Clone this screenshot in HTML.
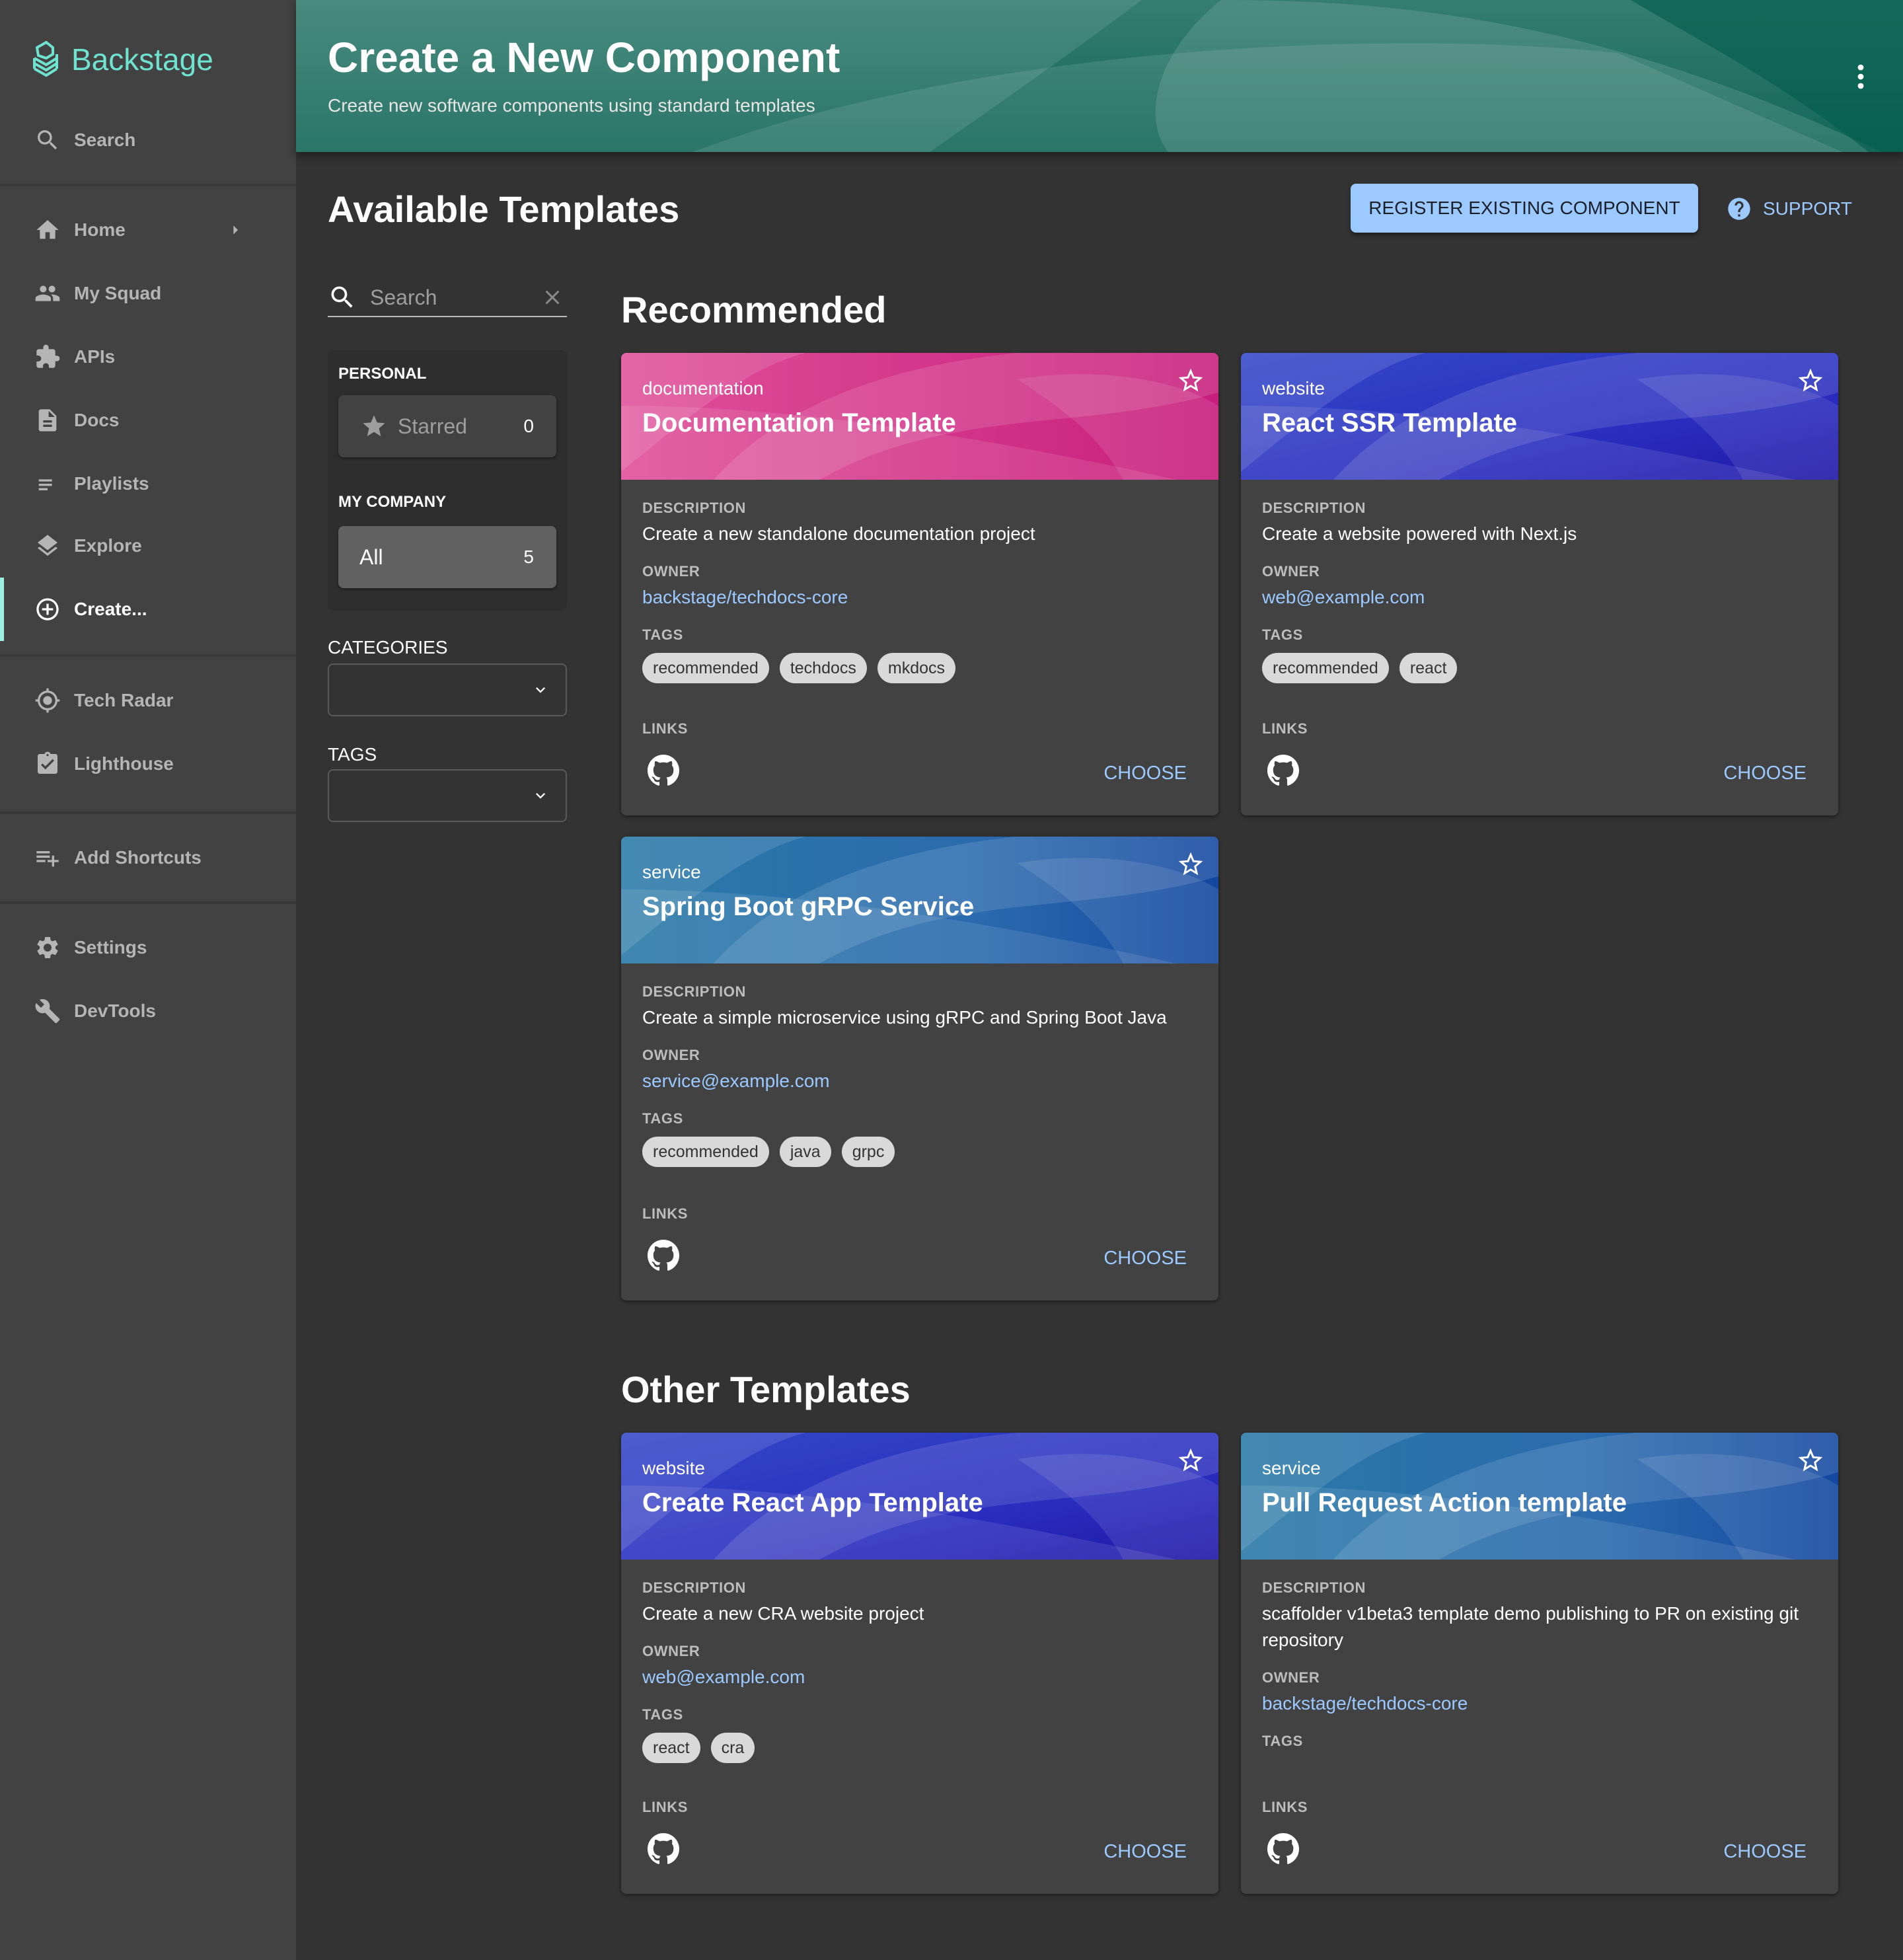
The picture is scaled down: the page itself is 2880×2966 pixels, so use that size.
<!DOCTYPE html>
<html><head><meta charset="utf-8">
<style>
*{box-sizing:border-box;margin:0;padding:0}
html,body{width:2880px;height:2966px;overflow:hidden;background:#333}
#root{zoom:2;width:1440px;height:1483px;position:relative;font-family:"Liberation Sans",Arial,sans-serif;color:#fff;background:#333}
.side{position:absolute;left:0;top:0;width:224px;height:1483px;background:#424242}
.logo{position:absolute;left:23px;top:30px;display:flex;align-items:center;color:#6fe3cf;font-size:23px}
.logo svg{margin-right:7px}
.si{position:absolute;left:0;width:224px;height:48px;display:flex;align-items:center;font-size:14px;font-weight:bold;color:#b5b5b5}
.si svg{position:absolute;left:26px;width:20px;height:20px;fill:#b5b5b5}
.si span{position:absolute;left:56px}
.div{position:absolute;left:0;width:224px;height:2px;background:#383838}
.hdr{position:absolute;left:224px;top:0;width:1216px;height:115px;background:#005b4b;overflow:hidden;box-shadow:0 3px 6px rgba(0,0,0,.4)}
.hdr h1{position:absolute;left:24px;top:25px;font-size:32px;font-weight:bold}
.hdr p{position:absolute;left:24px;top:72px;font-size:14px;color:#e6e6e6}
.h2{position:absolute;font-size:28px;font-weight:bold}
.btn{position:absolute;left:1022px;top:139px;width:263px;height:37px;background:#9cc9ff;border-radius:4px;color:#1a1f2a;font-size:14px;display:flex;align-items:center;justify-content:center;box-shadow:0 2px 3px rgba(0,0,0,.4)}
.sup{position:absolute;left:1306px;top:148px;color:#9cc9ff;font-size:14px;display:flex;align-items:center}
.srch{position:absolute;left:248px;top:210px;width:181px;height:30px;border-bottom:1px solid #bbb}
.fbox{position:absolute;left:248px;top:265px;width:181px;height:197px;background:#2e2e2e;border-radius:4px}
.lbl{position:absolute;font-size:12px;font-weight:bold}
.pill{position:absolute;left:8px;width:165px;height:47px;border-radius:4px;display:flex;align-items:center;font-size:16px;box-shadow:0 1px 2px rgba(0,0,0,.4)}
.sel{position:absolute;left:248px;width:181px;height:40px;border:1px solid #5a5a5a;border-radius:4px}
.sel svg{position:absolute;right:12px;top:12px}
.card{position:absolute;width:452px;background:#424242;border-radius:4px;overflow:hidden;box-shadow:0 1px 3px rgba(0,0,0,.5);display:flex;flex-direction:column}
.ch{position:relative;height:96px;flex:none;overflow:hidden}
.ch svg.bg{position:absolute;left:0;top:0}
.ch .t{position:absolute;left:16px;top:19px;font-size:14px}
.ch .n{position:absolute;left:16px;top:42px;font-size:20px;font-weight:bold}
.ch .st{position:absolute;right:10px;top:10px}
.cb{padding:15px 16px 0 16px;flex:1;display:flex;flex-direction:column}
.k{font-size:11px;font-weight:bold;color:#bdbdbd;letter-spacing:.3px;margin-bottom:3px}
.v{font-size:14px;line-height:20px;margin-bottom:12px}
.a{color:#9cc9ff}
.tags{display:flex;gap:8px;margin-top:4px;height:23px}
.tag{background:#d9d9d9;color:#333;font-size:12.5px;height:23px;border-radius:12px;padding:0 8px;display:flex;align-items:center}
.links{margin-top:auto;position:relative;height:72px;flex:none}
.links .k{position:absolute;top:0;left:0}
.links .gh{position:absolute;left:4px;top:26px}
.links .cz{position:absolute;right:8px;top:32px;color:#9cc9ff;font-size:14.5px}
</style></head><body><div id="root">

<div class="side">
  <div class="logo"><svg width="24" height="30" viewBox="0 0 24 30" fill="none" stroke="#6fe3cf" stroke-width="2"><path d="M5 6 L12 2 L17 6 L17 11 L12 14 L6 12Z"/><path d="M3 14 L12 19 L20 14"/><path d="M3 18 L12 23 L20 18"/><path d="M3 22 L12 27 L20 22"/><path d="M3 14 L3 22 M20 11 L20 22"/></svg>Backstage</div>
  <div class="si" style="top:82px"><svg viewBox="0 0 24 24"><path d="M15.5 14h-.79l-.28-.27A6.47 6.47 0 0 0 16 9.5 6.5 6.5 0 1 0 9.5 16c1.61 0 3.09-.59 4.23-1.57l.27.28v.79l5 4.99L20.49 19l-4.99-5zm-6 0C7.01 14 5 11.990 5 9.5S7.01 5 9.5 5 14 7.01 14 9.5 11.99 14 9.5 14z"/></svg><span>Search</span></div>
  <div class="div" style="top:139px"></div>
  <div class="si" style="top:150px"><svg viewBox="0 0 24 24"><path d="M10 20v-6h4v6h5v-8h3L12 3 2 12h3v8z"/></svg><span>Home</span><svg viewBox="0 0 24 24" style="left:170px;width:16px;height:16px"><path d="M10 17l5-5-5-5z"/></svg></div>
  <div class="si" style="top:198px"><svg viewBox="0 0 24 24"><path d="M16 11c1.66 0 2.99-1.34 2.99-3S17.66 5 16 5c-1.66 0-3 1.34-3 3s1.34 3 3 3zm-8 0c1.66 0 2.99-1.34 2.99-3S9.66 5 8 5C6.34 5 5 6.34 5 8s1.34 3 3 3zm0 2c-2.33 0-7 1.17-7 3.5V19h14v-2.5c0-2.33-4.67-3.5-7-3.5zm8 0c-.29 0-.62.02-.97.05 1.16.84 1.970 1.97 1.97 3.45V19h6v-2.5c0-2.33-4.67-3.5-7-3.5z"/></svg><span>My Squad</span></div>
  <div class="si" style="top:246px"><svg viewBox="0 0 24 24"><path d="M20.5 11H19V7c0-1.1-.9-2-2-2h-4V3.5a2.5 2.5 0 0 0-5 0V5H4c-1.1 0-2 .9-2 2v3.8h1.5c1.49 0 2.7 1.21 2.7 2.7s-1.21 2.7-2.7 2.7H2V20c0 1.1.9 2 2 2h3.8v-1.5c0-1.49 1.21-2.7 2.7-2.7 1.49 0 2.7 1.21 2.7 2.7V22H17c1.1 0 2-.9 2-2v-4h1.5a2.5 2.5 0 0 0 0-5z"/></svg><span>APIs</span></div>
  <div class="si" style="top:294px"><svg viewBox="0 0 24 24"><path d="M14 2H6c-1.1 0-2 .9-2 2v16c0 1.1.89 2 1.99 2H18c1.1 0 2-.9 2-2V8l-6-6zm2 16H8v-2h8v2zm0-4H8v-2h8v2zm-3-5V3.5L18.5 9H13z"/></svg><span>Docs</span></div>
  <div class="si" style="top:342px"><svg viewBox="0 0 24 24"><path d="M4 8h12v2H4zm0 4h12v2H4zm0 4h8v2H4z"/></svg><span>Playlists</span></div>
  <div class="si" style="top:389px"><svg viewBox="0 0 24 24"><path d="M11.99 18.54l-7.37-5.73L3 14.07l9 7 9-7-1.63-1.27-7.38 5.74zM12 16l7.36-5.73L21 9l-9-7-9 7 1.63 1.27L12 16z"/></svg><span>Explore</span></div>
  <div class="si" style="top:437px;color:#fff"><div style="position:absolute;left:0;top:0;width:3px;height:48px;background:#9bf0e1"></div><svg viewBox="0 0 24 24" style="fill:#fff"><path d="M13 7h-2v4H7v2h4v4h2v-4h4v-2h-4V7zm-1-5C6.48 2 2 6.48 2 12s4.48 10 10 10 10-4.48 10-10S17.52 2 12 2zm0 18c-4.41 0-8-3.59-8-8s3.59-8 8-8 8 3.59 8 8-3.59 8-8 8z"/></svg><span>Create...</span></div>
  <div class="div" style="top:495px"></div>
  <div class="si" style="top:506px"><svg viewBox="0 0 24 24"><path d="M12 8c-2.21 0-4 1.79-4 4s1.79 4 4 4 4-1.79 4-4-1.79-4-4-4zm8.94 3A8.99 8.99 0 0 0 13 3.06V1h-2v2.06A8.99 8.99 0 0 0 3.06 11H1v2h2.06A8.99 8.99 0 0 0 11 20.94V23h2v-2.06A8.99 8.99 0 0 0 20.94 13H23v-2h-2.06zM12 19c-3.87 0-7-3.13-7-7s3.13-7 7-7 7 3.13 7 7-3.13 7-7 7z"/></svg><span>Tech Radar</span></div>
  <div class="si" style="top:554px"><svg viewBox="0 0 24 24"><path d="M19 3h-4.18C14.4 1.84 13.3 1 12 1c-1.3 0-2.4.84-2.82 2H5c-1.1 0-2 .9-2 2v14c0 1.1.9 2 2 2h14c1.1 0 2-.9 2-2V5c0-1.1-.9-2-2-2zm-7 0c.55 0 1 .45 1 1s-.45 1-1 1-1-.45-1-1 .45-1 1-1zm-2 14l-4-4 1.41-1.41L10 14.17l6.59-6.59L18 9l-8 8z"/></svg><span>Lighthouse</span></div>
  <div class="div" style="top:614px"></div>
  <div class="si" style="top:625px"><svg viewBox="0 0 24 24"><path d="M14 10H2v2h12v-2zm0-4H2v2h12V6zm4 8v-4h-2v4h-4v2h4v4h2v-4h4v-2h-4zM2 16h8v-2H2v2z"/></svg><span>Add Shortcuts</span></div>
  <div class="div" style="top:682px"></div>
  <div class="si" style="top:693px"><svg viewBox="0 0 24 24"><path d="M19.14 12.94c.04-.3.06-.61.06-.94 0-.32-.02-.64-.07-.94l2.030-1.58a.49.49 0 0 0 .12-.61l-1.92-3.32a.49.49 0 0 0-.59-.22l-2.39.96c-.5-.38-1.03-.7-1.62-.94l-.36-2.54a.48.48 0 0 0-.48-.41h-3.84c-.24 0-.43.17-.47.41l-.36 2.54c-.59.24-1.13.57-1.62.94l-2.39-.96a.48.48 0 0 0-.59.22L2.74 8.87c-.12.21-.08.47.12.61l2.03 1.58c-.05.3-.09.63-.09.94s.02.64.07.94l-2.03 1.58a.49.49 0 0 0-.12.61l1.92 3.32c.12.22.37.29.59.22l2.39-.96c.5.38 1.03.7 1.62.94l.36 2.54c.05.24.24.41.48.41h3.84c.24 0 .44-.17.47-.41l.36-2.54c.59-.24 1.13-.56 1.62-.94l2.39.96c.22.08.47 0 .59-.22l1.92-3.32c.12-.22.07-.47-.12-.61l-2.01-1.58zM12 15.6c-1.98 0-3.6-1.62-3.6-3.6s1.62-3.6 3.6-3.6 3.6 1.62 3.6 3.6-1.62 3.6-3.6 3.6z"/></svg><span>Settings</span></div>
  <div class="si" style="top:741px"><svg viewBox="0 0 24 24"><path d="M22.7 19l-9.1-9.1c.9-2.3.4-5-1.5-6.9-2-2-5-2.4-7.4-1.3L9 6 6 9 1.6 4.7C.4 7.1.9 10.1 2.9 12.1c1.9 1.9 4.6 2.4 6.9 1.5l9.1 9.1c.4.4 1 .4 1.4 0l2.3-2.3c.5-.4.5-1.1.1-1.4z"/></svg><span>DevTools</span></div>
</div>

<div class="hdr">
  <svg width="1216" height="115" style="position:absolute;left:0;top:0">
    <defs><linearGradient id="hg" x1="0" y1="0" x2="0" y2="1"><stop offset="0" stop-color="#fff" stop-opacity=".3"/><stop offset="1" stop-color="#fff" stop-opacity=".1"/></linearGradient></defs>
    <rect width="1216" height="115" fill="url(#hg)" opacity=".7"/>
    <path d="M0 0 L640 0 C560 60 500 100 480 115 L0 115Z" fill="#fff" opacity=".1"/>
    <path d="M700 0 C650 40 640 90 660 115 L1200 115 C1000 20 850 0 700 0Z" fill="#fff" opacity=".12"/>
    <path d="M300 115 C500 40 800 20 1000 40 L1170 115Z" fill="#fff" opacity=".1"/>
    <path d="M1010 0 L1216 0 L1216 115 L1190 115 C1120 60 1060 30 1010 0Z" fill="#005b4b" opacity=".6"/>
  </svg>
  <h1>Create a New Component</h1>
  <p>Create new software components using standard templates</p>
  <svg style="position:absolute;right:29px;top:48px" width="6" height="20" viewBox="0 0 6 20" fill="#fff"><circle cx="3" cy="3" r="2.2"/><circle cx="3" cy="10" r="2.2"/><circle cx="3" cy="17" r="2.2"/></svg>
</div>

<div class="h2" style="left:248px;top:142px">Available Templates</div>
<div class="btn">REGISTER EXISTING COMPONENT</div>
<div class="sup"><svg width="20" height="20" viewBox="0 0 24 24" fill="#9cc9ff" style="margin-right:8px"><path d="M12 2C6.48 2 2 6.48 2 12s4.48 10 10 10 10-4.48 10-10S17.52 2 12 2zm1 17h-2v-2h2v2zm2.07-7.75l-.9.92C13.45 12.9 13 13.5 13 15h-2v-.5c0-1.1.45-2.1 1.17-2.83l1.24-1.26c.37-.36.59-.86.59-1.41 0-1.1-.9-2-2-2s-2 .9-2 2H8c0-2.21 1.79-4 4-4s4 1.79 4 4c0 .88-.36 1.68-.93 2.25z"/></svg>SUPPORT</div>

<div class="srch"><svg style="position:absolute;left:0;top:4px" width="22" height="22" viewBox="0 0 24 24" fill="#fff"><path d="M15.5 14h-.79l-.28-.27A6.47 6.47 0 0 0 16 9.5 6.5 6.5 0 1 0 9.5 16c1.61 0 3.09-.59 4.23-1.57l.27.28v.79l5 4.99L20.49 19l-4.99-5zm-6 0C7.01 14 5 11.99 5 9.5S7.01 5 9.5 5 14 7.01 14 9.5 11.99 14 9.5 14z"/></svg><span style="position:absolute;left:32px;top:6px;font-size:16px;color:#9e9e9e">Search</span><svg style="position:absolute;right:2px;top:6px" width="18" height="18" viewBox="0 0 24 24" fill="#8a8a8a"><path d="M19 6.41L17.59 5 12 10.59 6.41 5 5 6.41 10.59 12 5 17.59 6.41 19 12 13.41 17.59 19 19 17.59 13.41 12z"/></svg></div>

<div class="fbox">
  <div class="lbl" style="left:8px;top:11px">PERSONAL</div>
  <div class="pill" style="top:34px;background:#424242"><svg style="position:absolute;left:17px" width="20" height="20" viewBox="0 0 24 24" fill="#9e9e9e"><path d="M12 17.27L18.18 21l-1.64-7.03L22 9.24l-7.19-.61L12 2 9.19 8.63 2 9.24l5.46 4.73L5.82 21z"/></svg><span style="position:absolute;left:45px;color:#9e9e9e">Starred</span><span style="position:absolute;right:17px;font-size:14px">0</span></div>
  <div class="lbl" style="left:8px;top:108px">MY COMPANY</div>
  <div class="pill" style="top:133px;background:#616161"><span style="position:absolute;left:16px">All</span><span style="position:absolute;right:17px;font-size:14px">5</span></div>
</div>
<div style="position:absolute;left:248px;top:482px;font-size:14px">CATEGORIES</div>
<div class="sel" style="top:502px"><svg width="14" height="14" viewBox="0 0 24 24" fill="#fff"><path d="M7.41 8.59L12 13.17l4.59-4.58L18 10l-6 6-6-6z"/></svg></div>
<div style="position:absolute;left:248px;top:563px;font-size:14px">TAGS</div>
<div class="sel" style="top:582px"><svg width="14" height="14" viewBox="0 0 24 24" fill="#fff"><path d="M7.41 8.59L12 13.17l4.59-4.58L18 10l-6 6-6-6z"/></svg></div>

<div class="h2" style="left:470px;top:218px">Recommended</div>
<div class="h2" style="left:470px;top:1035px">Other Templates</div>

<svg width="0" height="0" style="position:absolute">
  <defs>
    <linearGradient id="gdoc" x1="0" y1="0" x2="1" y2="0"><stop offset="0" stop-color="#e0509a"/><stop offset="1" stop-color="#c81e7c"/></linearGradient>
    <linearGradient id="gweb" x1="0" y1="0" x2="1" y2="1"><stop offset="0" stop-color="#3448c8"/><stop offset=".6" stop-color="#2a2fc0"/><stop offset="1" stop-color="#2018a8"/></linearGradient>
    <linearGradient id="gsvc" x1="0" y1="0" x2="1" y2="0"><stop offset="0" stop-color="#2a7aa8"/><stop offset=".6" stop-color="#2b6aae"/><stop offset="1" stop-color="#1448a0"/></linearGradient>
    <symbol id="ov" viewBox="0 0 452 96">
      <path d="M0 90 C60 40 100 10 140 0 L0 0Z" fill="#fff" opacity=".12"/>
      <path d="M70 96 C120 40 200 10 300 0 L452 0 L452 30 C350 60 250 40 150 96Z" fill="#fff" opacity=".12"/>
      <path d="M0 40 C120 40 260 60 420 96 L0 96Z" fill="#fff" opacity=".1"/>
      <path d="M300 20 C360 10 420 20 452 40 L452 96 L380 96 C360 60 330 40 300 20Z" fill="#fff" opacity=".1"/>
    </symbol>
    <symbol id="gh" viewBox="0 0 16 16"><path fill="#fff" d="M8 0C3.58 0 0 3.58 0 8c0 3.54 2.29 6.53 5.47 7.59.4.07.55-.17.55-.38 0-.19-.01-.82-.01-1.49-2.01.37-2.53-.49-2.69-.94-.09-.23-.48-.94-.82-1.13-.28-.15-.68-.52-.01-.53.63-.01 1.08.58 1.23.82.72 1.21 1.87.87 2.33.66.07-.52.28-.87.51-1.07-1.78-.2-3.64-.89-3.64-3.95 0-.87.31-1.59.82-2.15-.08-.2-.36-1.02.08-2.12 0 0 .67-.21 2.2.82.64-.18 1.32-.27 2-.27.68 0 1.36.09 2 .27 1.53-1.04 2.2-.82 2.2-.82.44 1.1.16 1.92.08 2.12.51.56.82 1.27.82 2.15 0 3.07-1.87 3.75-3.65 3.95.29.25.54.73.54 1.48 0 1.07-.01 1.93-.01 2.2 0 .21.15.46.55.38A8.013 8.013 0 0 0 16 8c0-4.42-3.58-8-8-8z"/></symbol>
    <symbol id="star" viewBox="0 0 24 24"><path fill="#fff" d="M22 9.24l-7.19-.62L12 2 9.19 8.63 2 9.24l5.46 4.73L5.82 21 12 17.27 18.18 21l-1.63-7.03L22 9.24zM12 15.4l-3.76 2.27 1-4.28-3.32-2.88 4.38-.38L12 6.1l1.71 4.04 4.38.38-3.32 2.88 1 4.28L12 15.4z"/></symbol>
  </defs>
</svg>

<div class="card" style="left:470px;top:267px;height:350px">
  <div class="ch"><svg class="bg" width="452" height="96"><rect width="452" height="96" fill="url(#gdoc)"/><use href="#ov" width="452" height="96"/></svg>
    <div class="t">documentation</div><div class="n">Documentation Template</div><svg class="st" width="22" height="22"><use href="#star"/></svg></div>
  <div class="cb">
    <div class="k">DESCRIPTION</div><div class="v">Create a new standalone documentation project</div>
    <div class="k">OWNER</div><div class="v a">backstage/techdocs-core</div>
    <div class="k">TAGS</div><div class="tags"><div class="tag">recommended</div><div class="tag">techdocs</div><div class="tag">mkdocs</div></div>
    <div class="links"><div class="k">LINKS</div><svg class="gh" width="24" height="24"><use href="#gh"/></svg><div class="cz">CHOOSE</div></div>
  </div>
</div>
<div class="card" style="left:939px;top:267px;height:350px">
  <div class="ch"><svg class="bg" width="452" height="96"><rect width="452" height="96" fill="url(#gweb)"/><use href="#ov" width="452" height="96"/></svg>
    <div class="t">website</div><div class="n">React SSR Template</div><svg class="st" width="22" height="22"><use href="#star"/></svg></div>
  <div class="cb">
    <div class="k">DESCRIPTION</div><div class="v">Create a website powered with Next.js</div>
    <div class="k">OWNER</div><div class="v a">web@example.com</div>
    <div class="k">TAGS</div><div class="tags"><div class="tag">recommended</div><div class="tag">react</div></div>
    <div class="links"><div class="k">LINKS</div><svg class="gh" width="24" height="24"><use href="#gh"/></svg><div class="cz">CHOOSE</div></div>
  </div>
</div>
<div class="card" style="left:470px;top:633px;height:351px">
  <div class="ch"><svg class="bg" width="452" height="96"><rect width="452" height="96" fill="url(#gsvc)"/><use href="#ov" width="452" height="96"/></svg>
    <div class="t">service</div><div class="n">Spring Boot gRPC Service</div><svg class="st" width="22" height="22"><use href="#star"/></svg></div>
  <div class="cb">
    <div class="k">DESCRIPTION</div><div class="v">Create a simple microservice using gRPC and Spring Boot Java</div>
    <div class="k">OWNER</div><div class="v a">service@example.com</div>
    <div class="k">TAGS</div><div class="tags"><div class="tag">recommended</div><div class="tag">java</div><div class="tag">grpc</div></div>
    <div class="links"><div class="k">LINKS</div><svg class="gh" width="24" height="24"><use href="#gh"/></svg><div class="cz">CHOOSE</div></div>
  </div>
</div>
<div class="card" style="left:470px;top:1084px;height:349px">
  <div class="ch"><svg class="bg" width="452" height="96"><rect width="452" height="96" fill="url(#gweb)"/><use href="#ov" width="452" height="96"/></svg>
    <div class="t">website</div><div class="n">Create React App Template</div><svg class="st" width="22" height="22"><use href="#star"/></svg></div>
  <div class="cb">
    <div class="k">DESCRIPTION</div><div class="v">Create a new CRA website project</div>
    <div class="k">OWNER</div><div class="v a">web@example.com</div>
    <div class="k">TAGS</div><div class="tags"><div class="tag">react</div><div class="tag">cra</div></div>
    <div class="links"><div class="k">LINKS</div><svg class="gh" width="24" height="24"><use href="#gh"/></svg><div class="cz">CHOOSE</div></div>
  </div>
</div>
<div class="card" style="left:939px;top:1084px;height:349px">
  <div class="ch"><svg class="bg" width="452" height="96"><rect width="452" height="96" fill="url(#gsvc)"/><use href="#ov" width="452" height="96"/></svg>
    <div class="t">service</div><div class="n">Pull Request Action template</div><svg class="st" width="22" height="22"><use href="#star"/></svg></div>
  <div class="cb">
    <div class="k">DESCRIPTION</div><div class="v">scaffolder v1beta3 template demo publishing to PR on existing git repository</div>
    <div class="k">OWNER</div><div class="v a">backstage/techdocs-core</div>
    <div class="k">TAGS</div><div class="tags"></div>
    <div class="links"><div class="k">LINKS</div><svg class="gh" width="24" height="24"><use href="#gh"/></svg><div class="cz">CHOOSE</div></div>
  </div>
</div>

</div></body></html>
